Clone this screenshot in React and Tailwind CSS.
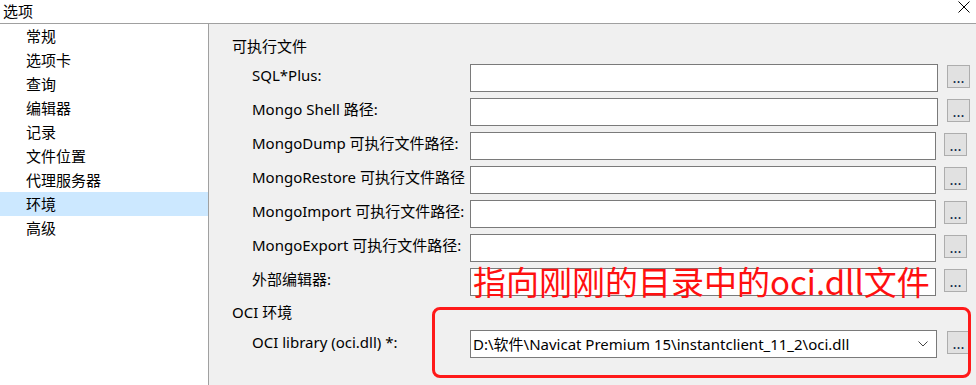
import React from "react";

const font = { fontFamily: '"Noto Sans", "Noto Sans CJK SC", sans-serif' };

const sideItems = ["常规", "选项卡", "查询", "编辑器", "记录", "文件位置", "代理服务器", "环境", "高级"];

const rows = [
  { label: "SQL*Plus:", w: "w-[468px]", gap: "ml-[9px]" },
  { label: "Mongo Shell 路径:", w: "w-[468px]", gap: "ml-[9px]" },
  { label: "MongoDump 可执行文件路径:", w: "w-[466px]", gap: "ml-[8px]" },
  { label: "MongoRestore 可执行文件路径", w: "w-[466px]", gap: "ml-[8px]" },
  { label: "MongoImport 可执行文件路径:", w: "w-[466px]", gap: "ml-[8px]" },
  { label: "MongoExport 可执行文件路径:", w: "w-[466px]", gap: "ml-[8px]" },
  { label: "外部编辑器:", w: "w-[466px]", gap: "ml-[8px]", note: true },
];

function DotsButton() {
  return (
    <div className="w-[23px] h-[23px] bg-[#e1e1e1] border border-[#adadad] flex items-end justify-center pb-[2px] text-[15px] leading-none text-[#0a1f44]">
      ...
    </div>
  );
}

export default function App() {
  return (
    <div className="relative w-[976px] h-[385px] bg-white overflow-hidden text-black text-[15px]" style={font}>
      <div className="h-[24px] flex items-start justify-between border-b border-[#a0a0a0]">
        <span className="pl-[3px] pt-[1px] leading-[20px]">选项</span>
        <svg className="mr-[6px] mt-[1px]" width="12" height="12" viewBox="0 0 12 12">
          <path d="M0.5 0.5 L11.5 11.5 M11.5 0.5 L0.5 11.5" stroke="#000" strokeWidth="1" />
        </svg>
      </div>
      <div className="flex h-[361px]">
        <div className="w-[208px] bg-white">
          {sideItems.map((t) => (
            <div
              key={t}
              className={`h-[24px] pl-[26px] flex items-center leading-none ${t === "环境" ? "bg-[#cce8ff]" : ""}`}
            >
              {t}
            </div>
          ))}
        </div>
        <div className="flex-1 bg-[#f0f0f0] border-l border-[#a0a0a0] pl-[23px] pt-[12px]">
          <div className="h-[20px] leading-[20px]">可执行文件</div>
          <div className="mt-[8px] flex flex-col gap-[6px]">
            {rows.map((r) => (
              <div key={r.label} className="flex items-start h-[28px]">
                <div className="w-[218px] ml-[20px] pt-[1px] leading-[20px] whitespace-nowrap">{r.label}</div>
                <div className={`relative ${r.w} h-[28px] bg-white border border-[#7a7a7a]`}>
                  {r.note && (
                    <div
                      className="absolute left-[2px] top-[-8px] text-[33px] leading-[40px] text-[#ff1010] whitespace-nowrap"
                      style={{ fontFamily: '"Noto Sans CJK SC", "Noto Sans", sans-serif' }}
                    >
                      指向刚刚的目录中的oci.dll文件
                    </div>
                  )}
                </div>
                <div className={`${r.gap} mt-[1px]`}>
                  <DotsButton />
                </div>
              </div>
            ))}
          </div>
          <div className="mt-[6px] h-[20px] leading-[20px]">OCI 环境</div>
          <div className="mt-[8px] flex items-start h-[28px]">
            <div className="w-[218px] ml-[20px] pt-[2px] leading-[20px] whitespace-nowrap">OCI library (oci.dll) *:</div>
            <div className="w-[467px] h-[28px] bg-white border border-[#7a7a7a] flex items-center justify-between pl-[2px] pr-[8px]">
              <span className="whitespace-nowrap leading-none">D:\软件\Navicat Premium 15\instantclient_11_2\oci.dll</span>
              <svg width="10" height="6" viewBox="0 0 10 6">
                <path d="M0.5 0.5 L5 5 L9.5 0.5" fill="none" stroke="#444" strokeWidth="1" />
              </svg>
            </div>
            <div className="ml-[10px] mt-[1px]">
              <DotsButton />
            </div>
          </div>
        </div>
      </div>
      <div className="absolute left-[432px] top-[307px] w-[539px] h-[71px] border-[3px] border-[#ff1a1a] rounded-[8px]"></div>
    </div>
  );
}
